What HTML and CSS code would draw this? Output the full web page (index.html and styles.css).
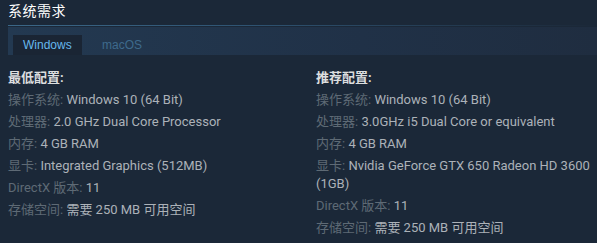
FILE: index.html
```html
<!DOCTYPE html>
<html lang="zh-CN">
<head>
	<meta charset="UTF-8">
	<title>系统需求</title>
	<link rel="stylesheet" href="styles.css">
</head>
<body>
	<div class="sysreq">
		<h2 class="sysreq-title">系统需求</h2>
		<div class="sysreq-tabs">
			<div class="tab tab-active">Windows</div>
			<div class="tab">macOS</div>
		</div>
		<div class="sysreq-cols">
			<div class="col col-left">
				<div class="col-head">最低配置:</div>
				<ul class="req-list">
					<li><span class="req-label">操作系统:</span> Windows 10 (64 Bit)</li>
					<li><span class="req-label">处理器:</span> 2.0 GHz Dual Core Processor</li>
					<li><span class="req-label">内存:</span> 4 GB RAM</li>
					<li><span class="req-label">显卡:</span> Integrated Graphics (512MB)</li>
					<li><span class="req-label">DirectX 版本:</span> 11</li>
					<li><span class="req-label">存储空间:</span> 需要 250 MB 可用空间</li>
				</ul>
			</div>
			<div class="col col-right">
				<div class="col-head">推荐配置:</div>
				<ul class="req-list">
					<li><span class="req-label">操作系统:</span> Windows 10 (64 Bit)</li>
					<li><span class="req-label">处理器:</span> 3.0GHz i5 Dual Core or equivalent</li>
					<li><span class="req-label">内存:</span> 4 GB RAM</li>
					<li><span class="req-label">显卡:</span> Nvidia GeForce GTX 650 Radeon HD 3600 (1GB)</li>
					<li><span class="req-label">DirectX 版本:</span> 11</li>
					<li><span class="req-label">存储空间:</span> 需要 250 MB 可用空间</li>
				</ul>
			</div>
		</div>
	</div>
</body>
</html>
```

FILE: styles.css
```css
html, body {
	margin: 0;
	background: #1b2838;
}

.sysreq { /* общий блок */
	padding: 0 0 0 8px;
	font-family: Roboto, "Noto Sans CJK SC", sans-serif;
	font-size: 13px;
	color: #acb2b8;
}

.sysreq-title {
	margin: 0;
	padding: 2px 0 5px;
	font-size: 14px;
	line-height: 18px;
	font-weight: normal;
	letter-spacing: 0.5px;
	color: #ffffff;
	border-bottom: 1px solid transparent;
	border-image: linear-gradient(to right, #3b6787 0%, #2f5473 40%, #1b2838 100%) 1;
}

.sysreq-tabs {
	display: flex;
	height: 28px;
	margin-top: 1px;
	padding: 8px 0 0 5px;
	box-sizing: border-box;
	background: linear-gradient(to right, #233951 0%, #203147 60%, #1f2d40 100%);
}

.tab {
	height: 20px;
	padding: 0 0 0 20px;
	font-family: "Liberation Sans", sans-serif;
	font-size: 12px;
	line-height: 20px;
	color: #3e6a8c;
}

.tab-active {
	width: 48px;
	padding: 0 11px 0 10px;
	background: #1a2534;
	color: #66b8ec;
}

.sysreq-cols {
	display: flex;
	padding-top: 12px;
}

.col-left {
	width: 308px;
	flex: none;
}

.col-right {
	flex: 1;
}

.col-head {
	line-height: 22px;
	font-weight: bold;
	color: #dcdedf;
}

.req-list {
	margin: 0;
	padding: 2px 0 0;
	list-style: none;
}

.req-list li {
	line-height: 18px;
	padding-bottom: 4px;
}

.req-label {
	color: #5e6a75;
}
```
